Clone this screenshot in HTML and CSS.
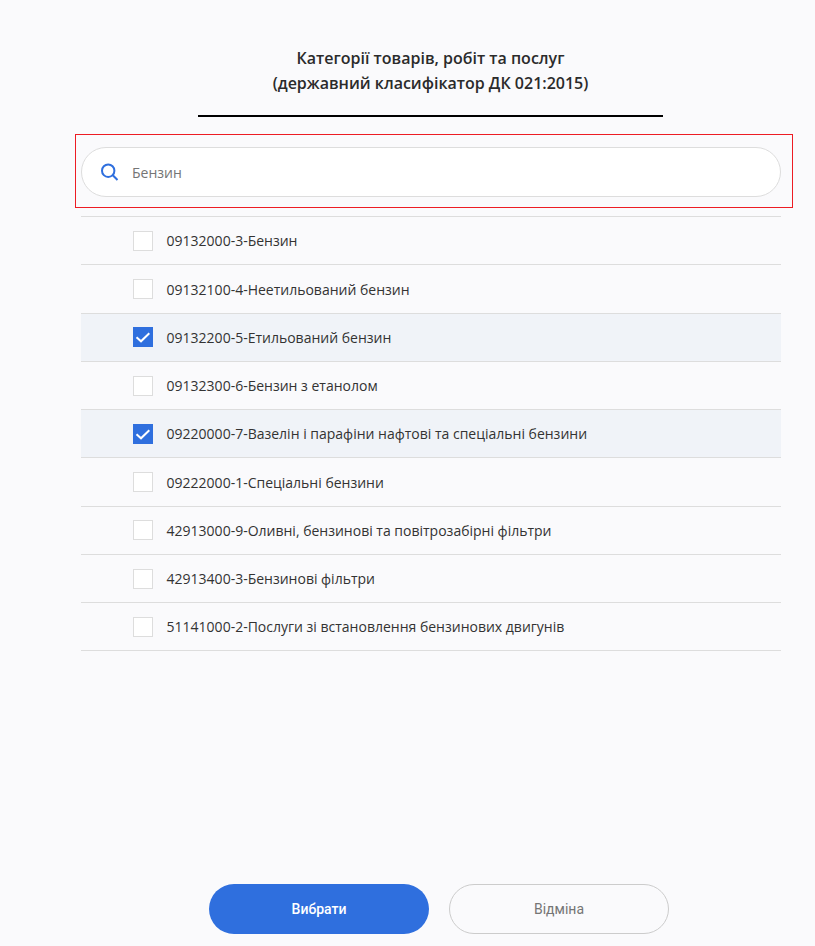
FILE: index.html
```html
<!DOCTYPE html>
<html lang="uk">
<head>
  <meta charset="UTF-8">
  <meta name="viewport" content="width=device-width, initial-scale=1.0">
  <title>Категорії товарів</title>
  <link rel="stylesheet" href="styles.css">
</head>
<body>
  <div class="modal">
    <h1 class="modal-title">Категорії товарів, робіт та послуг<br>(державний класифікатор ДК 021:2015)</h1>
    <div class="search-frame">
      <label class="search">
        <svg class="search-icon" width="18" height="18" viewBox="0 0 18 18" fill="none" stroke="#2f6fde" stroke-width="2">
          <circle cx="7.2" cy="7.7" r="6.2"/>
          <path d="M11.8 12.3L16.5 17"/>
        </svg>
        <input class="search-input" type="text" value="Бензин">
      </label>
    </div>
    <ul class="list">
      <li class="row"><span class="box"></span>09132000-3-Бензин</li>
      <li class="row"><span class="box"></span>09132100-4-Неетильований бензин</li>
      <li class="row selected"><span class="box"><svg width="20" height="20" viewBox="0 0 20 20" fill="none" stroke="#fff" stroke-width="2"><path d="M3.5 10.2L8 14.3L16.3 6.2"/></svg></span>09132200-5-Етильований бензин</li>
      <li class="row"><span class="box"></span>09132300-6-Бензин з етанолом</li>
      <li class="row selected"><span class="box"><svg width="20" height="20" viewBox="0 0 20 20" fill="none" stroke="#fff" stroke-width="2"><path d="M3.5 10.2L8 14.3L16.3 6.2"/></svg></span>09220000-7-Вазелін і парафіни нафтові та спеціальні бензини</li>
      <li class="row"><span class="box"></span>09222000-1-Спеціальні бензини</li>
      <li class="row"><span class="box"></span>42913000-9-Оливні, бензинові та повітрозабірні фільтри</li>
      <li class="row"><span class="box"></span>42913400-3-Бензинові фільтри</li>
      <li class="row"><span class="box"></span>51141000-2-Послуги зі встановлення бензинових двигунів</li>
    </ul>
    <div class="actions">
      <button class="btn btn-primary">Вибрати</button>
      <button class="btn btn-cancel">Відміна</button>
    </div>
  </div>
</body>
</html>
```

FILE: styles.css
```css
* {
  margin: 0;
  padding: 0;
  box-sizing: border-box;
}

body {
  font-family: 'Open Sans', 'Noto Sans', sans-serif;
  background-color: #fafafc;
  color: #333;
}

.modal {
  height: 946px;
  padding: 46px 22px 12px 75px;
  display: flex;
  flex-direction: column;
}

.modal-title {
  width: 465px;
  height: 71px;
  margin-left: 123px;
  border-bottom: 2px solid #000;
  font-size: 16px;
  font-weight: 600;
  line-height: 25px;
  text-align: center;
  color: #2b2b2b;
}

/* Search */
.search-frame {
  margin-top: 17px;
  height: 74px;
  padding: 12px 11px 0 5px;
  border: 1px solid #ed1c24;
}

.search {
  display: flex;
  align-items: center;
  height: 50px;
  padding-left: 19px;
  background-color: #fff;
  border: 1px solid #ddd;
  border-radius: 25px;
}

.search-icon {
  flex-shrink: 0;
}

.search-input {
  flex: 1;
  margin-left: 13px;
  border: none;
  outline: none;
  background: none;
  font-family: inherit;
  font-size: 14px;
  color: #757575;
}

/* List */
.list {
  list-style: none;
  margin: 8px 12px 0 6px;
  border-top: 1px solid #ddd;
}

.row {
  display: flex;
  align-items: center;
  height: 48.25px;
  padding-left: 52px;
  padding-top: 0.5px;
  border-bottom: 1px solid #ddd;
  font-size: 14px;
}

.row.selected {
  background-color: #f0f3f8;
}

.box {
  flex-shrink: 0;
  width: 20px;
  height: 20px;
  margin-right: 13.6px;
  background-color: #fff;
  border: 1px solid #ddd;
  position: relative;
}

.box svg {
  position: absolute;
  top: -1px;
  left: -1px;
}

.selected .box {
  background-color: #2f6fde;
  border-color: #2f6fde;
}

/* Buttons */
.actions {
  margin-top: auto;
  display: flex;
  gap: 20px;
  padding-left: 134px;
}

.btn {
  width: 220px;
  height: 50px;
  border-radius: 25px;
  font-family: Roboto, sans-serif;
  font-size: 14px;
  cursor: pointer;
}

.btn-primary {
  background-color: #2f6fde;
  border: none;
  color: #fff;
  font-weight: 500;
}

.btn-cancel {
  background: none;
  border: 1px solid #ccc;
  color: #757575;
  font-weight: 400;
}
```
